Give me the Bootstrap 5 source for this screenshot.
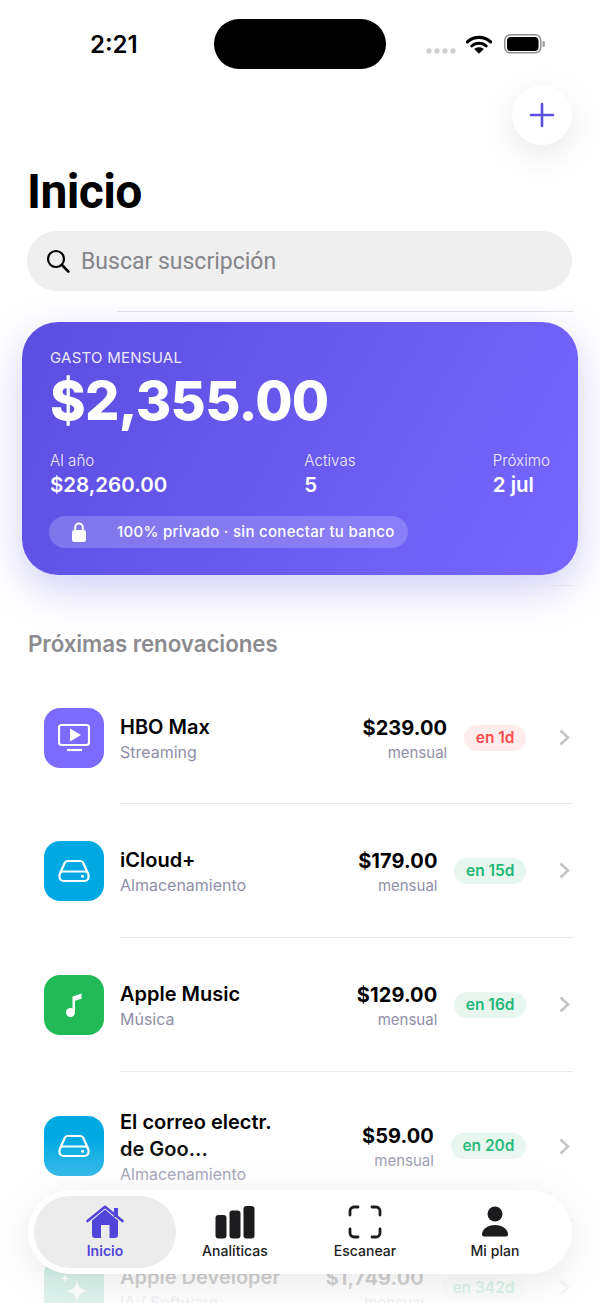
<!DOCTYPE html>
<html lang="es">
<head>
    <meta charset="UTF-8">
    <meta name="viewport" content="width=device-width, initial-scale=1.0">
    <title>Inicio</title>
    <link rel="stylesheet" href="https://cdn.jsdelivr.net/npm/bootstrap@5.3.0/dist/css/bootstrap.min.css">
    <style>
        html, body { height: 1303px; overflow: hidden; background: #fff; }
        body { font-family: "Inter", "Liberation Sans", sans-serif; color: #000; }
        .phone { position: relative; width: 600px; height: 1303px; overflow: hidden; background: #fff; }
        .status-row { padding: 19px 0 0 90px; height: 69px; }
        .clock { width: 124px; font-size: 24px; font-weight: 600; line-height: 52px; }
        .island { width: 172px; height: 50px; background: #000; border-radius: 25px; }
        .status-icons { margin-left: 40px; height: 50px; gap: 10px; }
        .signal-dots { margin-top: 14px; }
        .battery-icon { margin-left: 2px; }
        .add-row { padding: 16px 28px 0 0; }
        .add-btn { width: 60px; height: 60px; background: #fff; border: 0; border-radius: 50%; box-shadow: 0 10px 34px rgba(0,0,0,.09); padding: 0; }
        .page-title { font-family: "Roboto", sans-serif; font-size: 48px; font-weight: 700; line-height: 54px; letter-spacing: -.6px; margin: 20px 0 12px 27px; }
        .search-box { margin: 0 28px 0 27px; height: 60px; background: #efefef; border-radius: 30px; padding-left: 19px; gap: 11px; }
        .search-text { font-family: "Roboto", sans-serif; font-size: 23px; color: #85858a; padding-top: 2px; }
        .sep { height: 1px; background: #e4e4ea; }
        .sep-top { margin: 20px 27px 10px 117px; }
        .sep-bottom { margin: 10px 27px 0 117px; }
        .spend-card { margin: 0 22px; height: 253px; border-radius: 36px; padding: 27px 28px 0 28px; color: #fff; background: linear-gradient(120deg, #5a4de0 0%, #6a5cf0 55%, #7666ff 100%); box-shadow: 0 14px 40px rgba(91,79,224,.28); }
        .spend-label { font-size: 15px; line-height: 18px; letter-spacing: .25px; opacity: .88; }
        .spend-total { font-size: 54px; font-weight: 800; line-height: 60px; letter-spacing: -.7px; margin-top: 4px; }
        .spend-stats { margin-top: 20px; }
        .stat-key { font-size: 15.2px; line-height: 20px; font-weight: 300; opacity: .9; }
        .stat-val { font-size: 20.5px; line-height: 28px; font-weight: 600; }
        .private-pill { width: 359px; height: 32px; margin: 17px 0 0 -1px; border-radius: 16px; background: rgba(255,255,255,.2); padding-left: 23px; font-size: 15px; font-weight: 500; letter-spacing: .3px; }
        .private-pill svg { margin-right: 31px; }
        .section-title { font-size: 22.4px; font-weight: 600; line-height: 28px; color: #8c8c90; margin: 44px 0 0 28px; letter-spacing: -.1px; }
        .sub-row { height: 133px; padding: 0 30px 0 44px; gap: 16px; }
        .sub-row.first-row { margin-top: 14px; height: 131px; }
        .sub-row.tall-row { height: 148px; }
        .sub-icon { width: 60px; height: 60px; border-radius: 16px; flex: none; }
        .bg-tv { background: #7c6bff; }
        .bg-drive { background: #00a9e2; }
        .bg-music { background: #20ba56; }
        .bg-ai { background: #2bb58e; }
        .sub-text { padding-top: 2px; }
        .sub-name { font-size: 20px; font-weight: 600; line-height: 27px; }
        .sub-cat { font-size: 16px; line-height: 22px; color: #8f8fa8; }
        .sub-price { font-size: 20px; font-weight: 700; line-height: 27px; letter-spacing: .1px; }
        .sub-period { font-size: 15px; line-height: 21px; color: #8f8fa8; }
        .due-tag { height: 26px; line-height: 26px; padding: 0 11.5px; border-radius: 13px; font-size: 15.5px; font-weight: 600; margin: 0 17px 0 1px; }
        .due-soon { background: #ffecec; color: #ff4b4f; }
        .due-later { background: #e8f6f0; color: #1fb877; }
        .row-line { height: 1px; margin: 0 27px 0 120px; background: #e9e9ec; }
        .bottom-fade { position: absolute; left: 0; right: 0; bottom: 0; height: 165px; background: linear-gradient(to bottom, rgba(255,255,255,0) 0%, rgba(255,255,255,.82) 85%, rgba(255,255,255,.86) 100%); }
        .tab-bar { position: absolute; left: 28px; top: 1190px; width: 544px; height: 84px; padding: 0 12px; background: #fff; border-radius: 42px; box-shadow: 0 8px 44px rgba(0,0,0,.09); }
        .tab-item { position: relative; width: 130px; height: 84px; padding-top: 15px; font-size: 14px; font-weight: 500; line-height: 18px; letter-spacing: .05px; color: #1c1c1e; }
        .tab-item svg { position: relative; display: block; margin-bottom: 3px; }
        .tab-item span { position: relative; }
        .tab-on { color: #5144d9; font-weight: 600; }
        .tab-on::before { content: ""; position: absolute; left: -6px; right: -6px; top: 6px; bottom: 6px; border-radius: 36px; background: #ececec; }
    </style>
</head>
<body>
<div class="phone">

    <!-- status bar -->
    <div class="status-row d-flex align-items-start">
        <div class="clock">2:21</div>
        <div class="island"></div>
        <div class="status-icons d-flex align-items-center">
            <svg class="signal-dots" width="30" height="8" viewBox="0 0 30 8"><g fill="#cfcfd2"><circle cx="3" cy="4" r="2.7"/><circle cx="11" cy="4" r="2.7"/><circle cx="19" cy="4" r="2.7"/><circle cx="27" cy="4" r="2.7"/></g></svg>
            <svg width="26" height="19" viewBox="0 0 28 20"><path d="M1.500 7.200C8.500 .6 19.500 .6 26.500 7.200" fill="none" stroke="#000" stroke-width="3.400" stroke-linecap="round"/><path d="M6.200 11.600c4.300-4 11.300-4 15.600 0" fill="none" stroke="#000" stroke-width="3.200" stroke-linecap="round"/><path d="M8.800 14.800c3-2.600 7.400-2.600 10.400 0L14 20z" fill="#000"/></svg>
            <svg class="battery-icon" width="42" height="20" viewBox="0 0 42 20"><rect x=".8" y=".8" width="36" height="18" rx="5.500" fill="none" stroke="#8e8e8e" stroke-width="1.500"/><rect x="3" y="3" width="31.500" height="14" rx="3.800" fill="#000"/><rect x="38.600" y="7" width="2.200" height="6" rx="1.100" fill="#9a9a9a"/></svg>
        </div>
    </div>

    <!-- header -->
    <div class="add-row d-flex justify-content-end">
        <button class="add-btn d-flex align-items-center justify-content-center" aria-label="Agregar">
            <svg width="26" height="26" viewBox="0 0 26 26"><path d="M13 2v22M2 13h22" stroke="#5b4fe0" stroke-width="2.600" stroke-linecap="round"/></svg>
        </button>
    </div>
    <h1 class="page-title">Inicio</h1>
    <div class="search-box d-flex align-items-center">
        <svg width="24" height="24" viewBox="0 0 24 24"><circle cx="10" cy="10" r="8" fill="none" stroke="#000" stroke-width="2.200"/><path d="M16 16l6.400 6.600" stroke="#000" stroke-width="2.600" stroke-linecap="round"/></svg>
        <span class="search-text">Buscar suscripción</span>
    </div>

    <div class="sep sep-top"></div>

    <!-- monthly spend -->
    <div class="spend-card">
        <div class="spend-label">GASTO MENSUAL</div>
        <div class="spend-total">$2,355.00</div>
        <div class="spend-stats d-flex justify-content-between">
            <div>
                <div class="stat-key">Al año</div>
                <div class="stat-val">$28,260.00</div>
            </div>
            <div>
                <div class="stat-key">Activas</div>
                <div class="stat-val">5</div>
            </div>
            <div>
                <div class="stat-key">Próximo</div>
                <div class="stat-val">2 jul</div>
            </div>
        </div>
        <div class="private-pill d-flex align-items-center">
            <svg width="14" height="20" viewBox="0 0 14 20"><path d="M3.200 9V5.400a3.800 3.800 0 0 1 7.600 0V9" fill="none" stroke="#fff" stroke-width="2"/><rect y="8" width="14" height="12" rx="2.200" fill="#fff"/></svg>
            <span>100% privado · sin conectar tu banco</span>
        </div>
    </div>

    <div class="sep sep-bottom"></div>

    <div class="section-title">Próximas renovaciones</div>

    <!-- renewals -->
    <div class="sub-row first-row d-flex align-items-center">
        <div class="sub-icon bg-tv d-flex align-items-center justify-content-center">
            <svg width="32" height="29" viewBox="0 0 32 29"><rect x="1" y="2" width="30" height="20" rx="2.500" fill="none" stroke="#fff" stroke-width="2.200"/><path d="M12 5.500L23 12 12 18.500z" fill="#fff"/><path d="M9 27h15" stroke="#fff" stroke-width="2.200"/></svg>
        </div>
        <div class="sub-text flex-grow-1">
            <div class="sub-name">HBO Max</div>
            <div class="sub-cat">Streaming</div>
        </div>
        <div class="sub-text text-end">
            <div class="sub-price">$239.00</div>
            <div class="sub-period">mensual</div>
        </div>
        <div class="due-tag due-soon">en 1d</div>
        <svg width="11" height="17" viewBox="0 0 11 17"><path d="M1.500 1.500l7.500 7-7.500 7" fill="none" stroke="#c4c4c6" stroke-width="2.600"/></svg>
    </div>
    <div class="row-line"></div>

    <div class="sub-row d-flex align-items-center">
        <div class="sub-icon bg-drive d-flex align-items-center justify-content-center">
            <svg width="32" height="24" viewBox="0 0 32 24"><path d="M2 14.500L6.800 3.800A3 3 0 0 1 9.500 2h13a3 3 0 0 1 2.700 1.800L30 14.500" fill="none" stroke="#fff" stroke-width="2.200"/><rect x="1.500" y="12.500" width="29" height="9.500" rx="4" fill="none" stroke="#fff" stroke-width="2.200"/><circle cx="24.500" cy="17.200" r="1.500" fill="#fff"/></svg>
        </div>
        <div class="sub-text flex-grow-1">
            <div class="sub-name">iCloud+</div>
            <div class="sub-cat">Almacenamiento</div>
        </div>
        <div class="sub-text text-end">
            <div class="sub-price">$179.00</div>
            <div class="sub-period">mensual</div>
        </div>
        <div class="due-tag due-later">en 15d</div>
        <svg width="11" height="17" viewBox="0 0 11 17"><path d="M1.500 1.500l7.500 7-7.500 7" fill="none" stroke="#c4c4c6" stroke-width="2.600"/></svg>
    </div>
    <div class="row-line"></div>

    <div class="sub-row d-flex align-items-center">
        <div class="sub-icon bg-music d-flex align-items-center justify-content-center">
            <svg width="18" height="26" viewBox="0 0 18 26"><path d="M7.500 20V4.500L16.500 1.500V6.800L10 8.800V20z" fill="#fff"/><circle cx="5.500" cy="20.500" r="4.500" fill="#fff"/></svg>
        </div>
        <div class="sub-text flex-grow-1">
            <div class="sub-name">Apple Music</div>
            <div class="sub-cat">Música</div>
        </div>
        <div class="sub-text text-end">
            <div class="sub-price">$129.00</div>
            <div class="sub-period">mensual</div>
        </div>
        <div class="due-tag due-later">en 16d</div>
        <svg width="11" height="17" viewBox="0 0 11 17"><path d="M1.500 1.500l7.500 7-7.500 7" fill="none" stroke="#c4c4c6" stroke-width="2.600"/></svg>
    </div>
    <div class="row-line"></div>

    <div class="sub-row tall-row d-flex align-items-center">
        <div class="sub-icon bg-drive d-flex align-items-center justify-content-center">
            <svg width="32" height="24" viewBox="0 0 32 24"><path d="M2 14.500L6.800 3.800A3 3 0 0 1 9.500 2h13a3 3 0 0 1 2.700 1.800L30 14.500" fill="none" stroke="#fff" stroke-width="2.200"/><rect x="1.500" y="12.500" width="29" height="9.500" rx="4" fill="none" stroke="#fff" stroke-width="2.200"/><circle cx="24.500" cy="17.200" r="1.500" fill="#fff"/></svg>
        </div>
        <div class="sub-text flex-grow-1">
            <div class="sub-name">El correo electr.<br>de Goo...</div>
            <div class="sub-cat">Almacenamiento</div>
        </div>
        <div class="sub-text text-end">
            <div class="sub-price">$59.00</div>
            <div class="sub-period">mensual</div>
        </div>
        <div class="due-tag due-later">en 20d</div>
        <svg width="11" height="17" viewBox="0 0 11 17"><path d="M1.500 1.500l7.500 7-7.500 7" fill="none" stroke="#c4c4c6" stroke-width="2.600"/></svg>
    </div>
    <div class="row-line"></div>

    <div class="sub-row d-flex align-items-center">
        <div class="sub-icon bg-ai d-flex align-items-center justify-content-center">
            <svg width="32" height="36" viewBox="0 0 32 36"><path d="M19 10c1 7 4 10 11 11-7 1-10 4-11 11-1-7-4-10-11-11 7-1 10-4 11-11z" fill="#fff"/><path d="M7 4c.5 3 1.500 4 4.500 4.500C8.500 9 7.500 10 7 13c-.5-3-1.500-4-4.500-4.500C5.500 8 6.500 7 7 4z" fill="#fff"/></svg>
        </div>
        <div class="sub-text flex-grow-1">
            <div class="sub-name">Apple Developer</div>
            <div class="sub-cat">IA / Software</div>
        </div>
        <div class="sub-text text-end">
            <div class="sub-price">$1,749.00</div>
            <div class="sub-period">mensual</div>
        </div>
        <div class="due-tag due-later">en 342d</div>
        <svg width="11" height="17" viewBox="0 0 11 17"><path d="M1.500 1.500l7.500 7-7.500 7" fill="none" stroke="#c4c4c6" stroke-width="2.600"/></svg>
    </div>

    <div class="bottom-fade"></div>

    <!-- tab bar -->
    <div class="tab-bar d-flex">
        <div class="tab-item tab-on d-flex flex-column align-items-center">
            <svg width="38" height="34" viewBox="0 0 38 34"><path d="M6 15.500L19 4.500l13 11V30a3 3 0 0 1-3 3H9a3 3 0 0 1-3-3z" fill="#5144d9"/><path d="M1.500 16L19 1.800 36.500 16" fill="none" stroke="#5144d9" stroke-width="2.600" stroke-linecap="round" stroke-linejoin="round"/><rect x="28" y="3" width="4" height="9" fill="#5144d9"/><rect x="15" y="20" width="8.500" height="13" fill="#ececec"/></svg>
            <span>Inicio</span>
        </div>
        <div class="tab-item d-flex flex-column align-items-center">
            <svg width="40" height="34" viewBox="0 0 40 34"><rect x=".500" y="10" width="11" height="23.500" rx="3" fill="#1c1c1e"/><rect x="14.500" y="5.500" width="11" height="28" rx="3" fill="#1c1c1e"/><rect x="28.500" y="1" width="11" height="32.500" rx="3" fill="#1c1c1e"/></svg>
            <span>Analíticas</span>
        </div>
        <div class="tab-item d-flex flex-column align-items-center">
            <svg width="34" height="34" viewBox="0 0 34 34"><path d="M2 10V6a4 4 0 0 1 4-4h4M24 2h4a4 4 0 0 1 4 4v4M32 24v4a4 4 0 0 1-4 4h-4M10 32H6a4 4 0 0 1-4-4v-4" fill="none" stroke="#1c1c1e" stroke-width="2.800" stroke-linecap="round"/></svg>
            <span>Escanear</span>
        </div>
        <div class="tab-item d-flex flex-column align-items-center">
            <svg width="30" height="34" viewBox="0 0 30 34"><circle cx="15" cy="9" r="7.500" fill="#1c1c1e"/><path d="M2 29.500C2 24 8 20 15 20s13 4 13 9.500c0 1-.8 2-2 2H4c-1.200 0-2-1-2-2z" fill="#1c1c1e"/></svg>
            <span>Mi plan</span>
        </div>
    </div>
</div>
<script src="https://cdn.jsdelivr.net/npm/bootstrap@5.3.0/dist/js/bootstrap.bundle.min.js"></script>
</body>
</html>
